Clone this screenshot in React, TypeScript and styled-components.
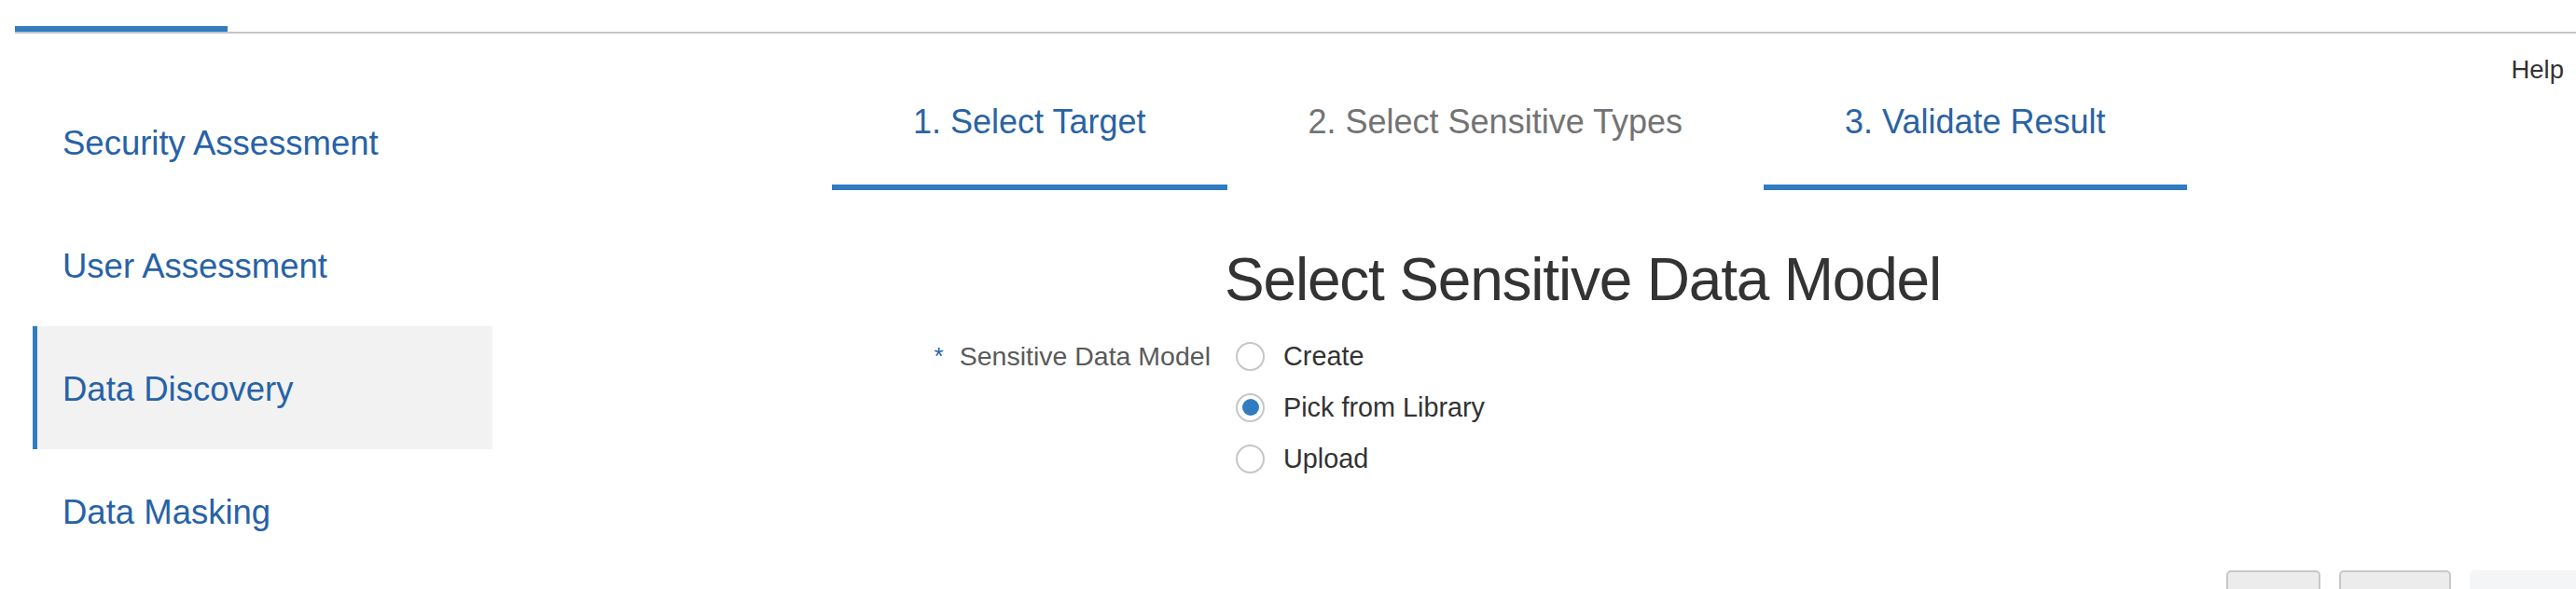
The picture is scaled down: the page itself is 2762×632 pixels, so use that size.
import React from "react";
import styled, { createGlobalStyle } from "styled-components";

const GlobalStyle = createGlobalStyle`
  html, body {
    margin: 0;
    padding: 0;
    overflow: hidden;
    background: #ffffff;
  }
  body {
    font-family: "Liberation Sans", Arial, Helvetica, sans-serif;
    color: #333333;
  }
  * { box-sizing: border-box; }
`;

const Page = styled.div`
  width: 2762px;
  height: 632px;
  overflow: hidden;
  display: flex;
  flex-direction: column;
`;

const TopStrip = styled.div`
  margin-top: 28px;
  margin-left: 16px;
  display: flex;
  border-bottom: 2px solid #c4c4c4;
`;

const TopIndicator = styled.div`
  width: 228px;
  height: 6px;
  background: #317cc1;
`;

const Body = styled.div`
  display: grid;
  grid-template-columns: 528px 1fr;
  flex: 1;
  min-height: 0;
`;

const Sidebar = styled.nav`
  padding-top: 50px;
  padding-left: 35px;
  display: flex;
  flex-direction: column;
`;

const NavItem = styled.div<{ $active?: boolean }>`
  height: 132px;
  display: flex;
  align-items: center;
  padding: 3px 0 0 27px;
  border-left: 5px solid ${(p) => (p.$active ? "#317cc1" : "transparent")};
  background: ${(p) => (p.$active ? "#f2f2f2" : "transparent")};
  color: #2762a7;
  font-size: 36.5px;
  line-height: 42px;
`;

const Content = styled.main`
  display: flex;
  flex-direction: column;
  min-width: 0;
`;

const HelpRow = styled.div`
  margin-top: 23px;
  padding-right: 13px;
  text-align: right;
  font-size: 27.5px;
  line-height: 32px;
  color: #333333;
`;

const Steps = styled.div`
  margin-top: 20px;
  padding-left: 364px;
  display: flex;
`;

const Step = styled.div<{ $done?: boolean }>`
  padding: 0 87px 47px;
  font-size: 36px;
  line-height: 40px;
  white-space: nowrap;
  color: ${(p) => (p.$done ? "#2a63a3" : "#737373")};
  border-bottom: 6px solid ${(p) => (p.$done ? "#317cc1" : "transparent")};
`;

const Title = styled.h1`
  margin: 60px 0 0 785px;
  font-size: 64px;
  line-height: 72px;
  font-weight: 400;
  letter-spacing: -1.2px;
  color: #333333;
  white-space: nowrap;
`;

const Form = styled.div`
  margin-top: 18.5px;
  margin-left: 472px;
  display: grid;
  grid-template-columns: 298px auto;
  column-gap: 27px;
  align-items: start;
`;

const FieldLabel = styled.div`
  height: 55px;
  display: flex;
  align-items: center;
  justify-content: flex-end;
  font-size: 28.5px;
  color: #5a5a5a;
  white-space: nowrap;
`;

const Required = styled.span`
  color: #2762a7;
  font-size: 26px;
  margin-right: 17px;
  vertical-align: 9px;
`;

const Options = styled.div`
  display: flex;
  flex-direction: column;
`;

const OptionRow = styled.label`
  height: 55px;
  display: flex;
  align-items: center;
  gap: 20px;
  font-size: 28.8px;
  color: #333333;
`;

const RadioCircle = styled.span<{ $checked?: boolean }>`
  width: 31px;
  height: 31px;
  border-radius: 50%;
  border: 2px solid #c6c6c6;
  background: #ffffff;
  display: flex;
  align-items: center;
  justify-content: center;
  flex: none;

  &::after {
    content: "";
    width: 18px;
    height: 18px;
    border-radius: 50%;
    background: ${(p) => (p.$checked ? "#317cc1" : "transparent")};
  }
`;

const ButtonBar = styled.div`
  margin-top: 92.5px;
  margin-right: -40px;
  display: flex;
  justify-content: flex-end;
  gap: 20px;
`;

const Button = styled.div<{ $w: number; $plain?: boolean }>`
  width: ${(p) => p.$w}px;
  height: 60px;
  flex: none;
  border-radius: 5px;
  background: ${(p) => (p.$plain ? "#f4f5f6" : "#ececec")};
  border: ${(p) => (p.$plain ? "none" : "2px solid #c8c8c8")};
`;

const navItems = [
  { label: "Security Assessment" },
  { label: "User Assessment" },
  { label: "Data Discovery", active: true },
  { label: "Data Masking" },
];

const steps = [
  { label: "1. Select Target", done: true },
  { label: "2. Select Sensitive Types", done: false },
  { label: "3. Validate Result", done: true },
];

const options = [
  { label: "Create", checked: false },
  { label: "Pick from Library", checked: true },
  { label: "Upload", checked: false },
];

export default function App() {
  return (
    <>
      <GlobalStyle />
      <Page>
        <TopStrip>
          <TopIndicator />
        </TopStrip>
        <Body>
          <Sidebar>
            {navItems.map((n) => (
              <NavItem key={n.label} $active={n.active}>
                {n.label}
              </NavItem>
            ))}
          </Sidebar>
          <Content>
            <HelpRow>Help</HelpRow>
            <Steps>
              {steps.map((s) => (
                <Step key={s.label} $done={s.done}>
                  {s.label}
                </Step>
              ))}
            </Steps>
            <Title>Select Sensitive Data Model</Title>
            <Form>
              <FieldLabel>
                <Required>*</Required>
                Sensitive Data Model
              </FieldLabel>
              <Options>
                {options.map((o) => (
                  <OptionRow key={o.label}>
                    <RadioCircle $checked={o.checked} />
                    {o.label}
                  </OptionRow>
                ))}
              </Options>
            </Form>
            <ButtonBar>
              <Button $w={101} />
              <Button $w={120} />
              <Button $w={154} $plain />
            </ButtonBar>
          </Content>
        </Body>
      </Page>
    </>
  );
}
